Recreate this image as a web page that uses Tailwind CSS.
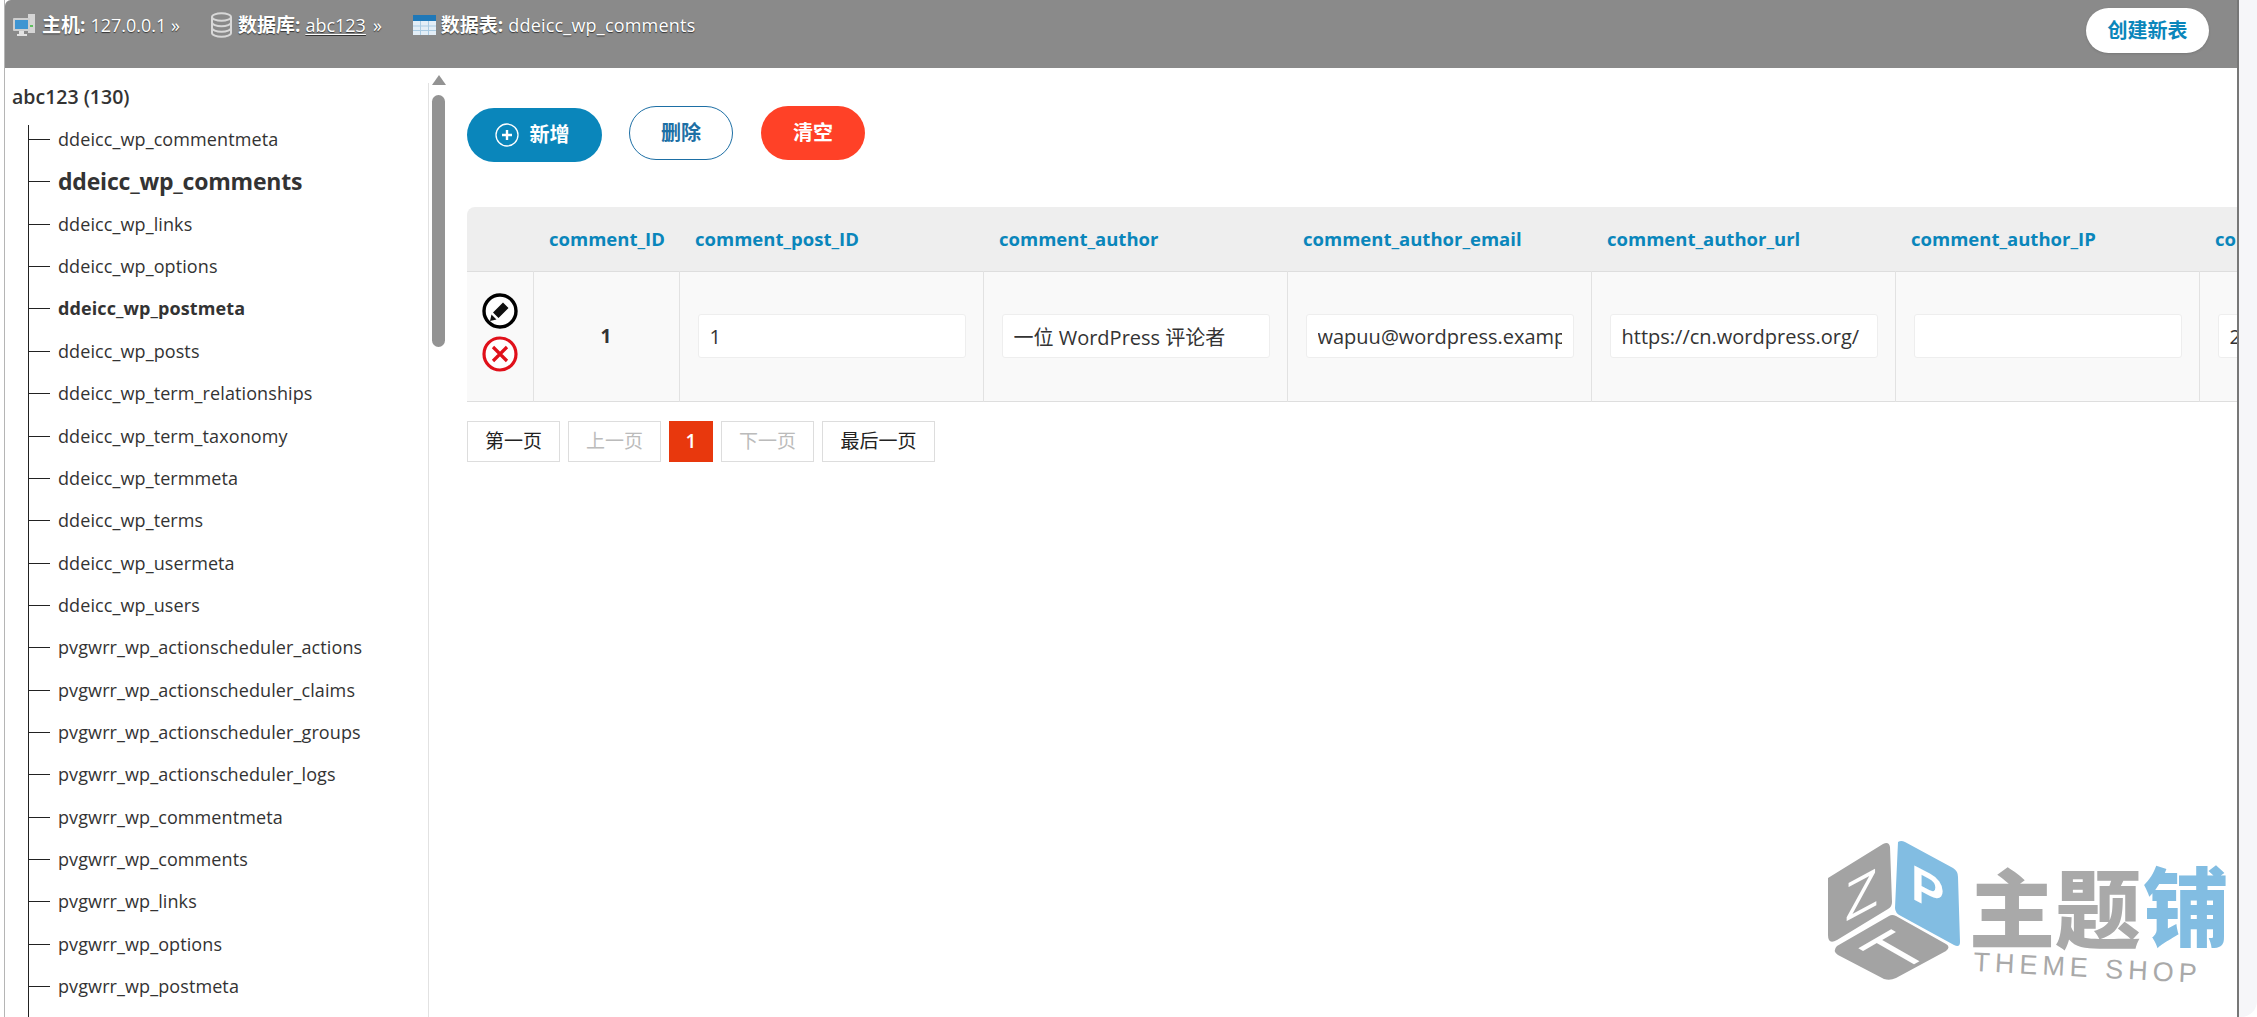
<!DOCTYPE html>
<html lang="zh-CN">
<head>
  <meta charset="UTF-8" />
  <title>数据表: ddeicc_wp_comments</title>
  <script src="https://cdn.jsdelivr.net/npm/@tailwindcss/browser@4"></script>
</head>
<body class="flex h-screen overflow-hidden bg-white pl-1 font-['Open_Sans','Noto_Sans_CJK_SC',sans-serif] text-[18px] text-[#333]">
  <div class="relative flex h-full w-[2235px] shrink-0 flex-col overflow-hidden border-l border-r-2 border-l-[#b5b5b5] border-r-[#777777] bg-white">
    <!-- Top bar -->
    <header class="flex h-[68px] shrink-0 items-start justify-between rounded-tl-md bg-[#8a8a8a] pl-[7px] pr-[28px] text-white [text-shadow:0_1px_1px_#333]">
      <div class="flex items-center pt-[12px] leading-[26px]">
        <svg class="mr-[6px] h-[24px] w-[24px]" viewBox="0 0 24 24">
          <rect x="16" y="1" width="7" height="19" fill="#d5d5d5" />
          <rect x="18" y="12" width="3" height="2" fill="#5fbf5f" />
          <rect x="1" y="5" width="17" height="13" rx="1" fill="#cfcfcf" />
          <rect x="3" y="7" width="13" height="9" fill="#3f95d2" />
          <path d="M7 18h5v3h3v2H5v-2h2z" fill="#e2e2e2" />
        </svg>
        <span class="text-[19px] font-bold">主机:</span>
        <span class="ml-[5px]">127.0.0.1 »</span>
        <svg class="ml-[30px] mr-[5px] h-[26px] w-[23px]" viewBox="0 0 23 26" fill="none" stroke="#d8d8d8" stroke-width="2">
          <ellipse cx="11.5" cy="5" rx="9.5" ry="3.8" />
          <path d="M2 5v16c0 2 4.300 3.800 9.500 3.800s9.500-1.800 9.500-3.800V5" />
          <path d="M2 10.500c0 2 4.300 3.800 9.500 3.800s9.500-1.800 9.500-3.800M2 16c0 2 4.300 3.800 9.500 3.800s9.500-1.800 9.500-3.800" />
        </svg>
        <span class="text-[19px] font-bold">数据库:</span>
        <a class="ml-[5px] underline underline-offset-2">abc123</a>
        <span class="ml-[7px]">»</span>
        <svg class="ml-[31px] mr-[5px] h-[20px] w-[23px]" viewBox="0 0 23 20">
          <rect width="23" height="20" fill="#e3eef7" />
          <rect width="23" height="6" fill="#1f78b8" />
          <path d="M0 11h23M0 15.500h23M7.500 6v14M15.500 6v14" stroke="#a9cbe3" stroke-width="1" />
        </svg>
        <span class="text-[19px] font-bold">数据表:</span>
        <span class="ml-[5px] tracking-[0.2px]">ddeicc_wp_comments</span>
      </div>
      <button class="mt-[8px] h-[45px] w-[123px] rounded-full bg-white text-[20px] font-bold text-[#0a86bb] shadow-sm [text-shadow:none]">创建新表</button>
    </header>

    <div class="flex min-h-0 flex-1">
      <!-- Table list -->
      <aside class="mt-[15px] w-[424px] shrink-0 border-r border-[#e2e2e2]">
        <h2 class="h-[28px] pl-[7px] text-[19.500px] leading-[28px] font-semibold text-[#333]">abc123 (130)</h2>
        <ul class="ml-[23px] mt-[14px] h-[900px] border-l border-[#222] tracking-[0.1px]">
          <li class="flex h-[28px] items-center"><span class="mr-[8px] h-px w-[21px] bg-[#222]"></span>ddeicc_wp_commentmeta</li>
          <li class="flex h-[50px] items-center pt-[7px] text-[23px] font-bold tracking-[-0.2px]"><span class="mr-[8px] h-px w-[21px] bg-[#222]"></span>ddeicc_wp_comments</li>
          <li class="flex h-[42.350px] items-center"><span class="mr-[8px] h-px w-[21px] bg-[#222]"></span>ddeicc_wp_links</li>
          <li class="flex h-[42px] items-center"><span class="mr-[8px] h-px w-[21px] bg-[#222]"></span>ddeicc_wp_options</li>
          <li class="flex h-[42.850px] items-center font-bold"><span class="mr-[8px] h-px w-[21px] bg-[#222]"></span>ddeicc_wp_postmeta</li>
          <li class="flex h-[42.350px] items-center"><span class="mr-[8px] h-px w-[21px] bg-[#222]"></span>ddeicc_wp_posts</li>
          <li class="flex h-[42.350px] items-center"><span class="mr-[8px] h-px w-[21px] bg-[#222]"></span>ddeicc_wp_term_relationships</li>
          <li class="flex h-[42.350px] items-center"><span class="mr-[8px] h-px w-[21px] bg-[#222]"></span>ddeicc_wp_term_taxonomy</li>
          <li class="flex h-[42.350px] items-center"><span class="mr-[8px] h-px w-[21px] bg-[#222]"></span>ddeicc_wp_termmeta</li>
          <li class="flex h-[42.350px] items-center"><span class="mr-[8px] h-px w-[21px] bg-[#222]"></span>ddeicc_wp_terms</li>
          <li class="flex h-[42.350px] items-center"><span class="mr-[8px] h-px w-[21px] bg-[#222]"></span>ddeicc_wp_usermeta</li>
          <li class="flex h-[42.350px] items-center"><span class="mr-[8px] h-px w-[21px] bg-[#222]"></span>ddeicc_wp_users</li>
          <li class="flex h-[42.350px] items-center"><span class="mr-[8px] h-px w-[21px] bg-[#222]"></span>pvgwrr_wp_actionscheduler_actions</li>
          <li class="flex h-[42.350px] items-center"><span class="mr-[8px] h-px w-[21px] bg-[#222]"></span>pvgwrr_wp_actionscheduler_claims</li>
          <li class="flex h-[42.350px] items-center"><span class="mr-[8px] h-px w-[21px] bg-[#222]"></span>pvgwrr_wp_actionscheduler_groups</li>
          <li class="flex h-[42.350px] items-center"><span class="mr-[8px] h-px w-[21px] bg-[#222]"></span>pvgwrr_wp_actionscheduler_logs</li>
          <li class="flex h-[42.350px] items-center"><span class="mr-[8px] h-px w-[21px] bg-[#222]"></span>pvgwrr_wp_commentmeta</li>
          <li class="flex h-[42.350px] items-center"><span class="mr-[8px] h-px w-[21px] bg-[#222]"></span>pvgwrr_wp_comments</li>
          <li class="flex h-[42.350px] items-center"><span class="mr-[8px] h-px w-[21px] bg-[#222]"></span>pvgwrr_wp_links</li>
          <li class="flex h-[42.350px] items-center"><span class="mr-[8px] h-px w-[21px] bg-[#222]"></span>pvgwrr_wp_options</li>
          <li class="flex h-[42.350px] items-center"><span class="mr-[8px] h-px w-[21px] bg-[#222]"></span>pvgwrr_wp_postmeta</li>
        </ul>
      </aside>

      <!-- Scrollbar -->
      <div class="flex w-[19px] shrink-0 flex-col items-center pt-[7px]">
        <div class="h-0 w-0 border-x-[7px] border-b-[10px] border-x-transparent border-b-[#939393]"></div>
        <div class="mt-[10px] h-[252px] w-[13px] rounded-full bg-[#939393]"></div>
      </div>

      <!-- Content -->
      <main class="min-w-0 flex-1 overflow-hidden pl-[19px] pt-[38px]">
        <div class="flex h-[101px] items-start text-[20px] font-bold">
          <button class="mt-[2px] flex h-[54px] w-[135px] items-center justify-center rounded-full bg-[#0a86bb] pr-[5px] text-white">
            <svg class="mr-[11px] h-[24px] w-[24px]" viewBox="0 0 24 24" fill="none" stroke="#fff">
              <circle cx="12" cy="12" r="11" stroke-width="1.300" />
              <path d="M12 7v10M7 12h10" stroke-width="2.400" />
            </svg>新增
          </button>
          <button class="ml-[27px] h-[54px] w-[104px] rounded-full border border-[#1d6fa5] bg-white text-[#1d6fa5]">删除</button>
          <button class="ml-[28px] h-[54px] w-[104px] rounded-full bg-[#ff4127] text-white">清空</button>
        </div>

        <table class="w-[2036px] max-w-none table-fixed border-collapse">
          <thead>
            <tr class="h-[64px] bg-[#eeeeee] text-left text-[18.500px] text-[#0a86bb]">
              <th class="w-[66px] rounded-tl-lg font-bold"></th>
              <th class="w-[146px] pl-[16px] font-bold">comment_ID</th>
              <th class="w-[304px] pl-[16px] font-bold">comment_post_ID</th>
              <th class="w-[304px] pl-[16px] font-bold">comment_author</th>
              <th class="w-[304px] pl-[16px] font-bold">comment_author_email</th>
              <th class="w-[304px] pl-[16px] font-bold">comment_author_url</th>
              <th class="w-[304px] pl-[16px] font-bold">comment_author_IP</th>
              <th class="w-[304px] pl-[16px] font-bold">comment_date</th>
            </tr>
          </thead>
          <tbody>
            <tr class="h-[130px] border-y border-[#dedede] bg-[#f9f9f9]">
              <td class="border-r border-[#e2e2e2]">
                <div class="mb-[7px] flex flex-col items-center gap-[7px]">
                  <svg class="h-[36px] w-[36px]" viewBox="0 0 36 36">
                    <circle cx="18" cy="18" r="16" fill="#fff" stroke="#000" stroke-width="3.400" />
                    <path d="M21 9.500l5.500 5.500-10 10-5.500-5.500z M9.500 21.500l5 5-6.500 1.500z" fill="#111" />
                  </svg>
                  <svg class="h-[36px] w-[36px]" viewBox="0 0 36 36">
                    <circle cx="18" cy="18" r="16" fill="#fff" stroke="#e0101a" stroke-width="3.200" />
                    <path d="M11 11l14 14M25 11L11 25" stroke="#e0101a" stroke-width="3.200" />
                  </svg>
                </div>
              </td>
              <td class="border-r border-[#e2e2e2] text-center text-[19px] font-bold">1</td>
              <td class="border-r border-[#e2e2e2] pl-[18px]"><input class="h-[44px] w-[268px] rounded-[3px] border border-[#eeeeee] bg-white px-[11px] text-[20px] text-[#333]" value="1" /></td>
              <td class="border-r border-[#e2e2e2] pl-[18px]"><input class="h-[44px] w-[268px] rounded-[3px] border border-[#eeeeee] bg-white px-[11px] text-[20px] text-[#333]" value="一位 WordPress 评论者" /></td>
              <td class="border-r border-[#e2e2e2] pl-[18px]"><input class="h-[44px] w-[268px] rounded-[3px] border border-[#eeeeee] bg-white px-[11px] text-[20px] text-[#333]" value="wapuu@wordpress.example.org" /></td>
              <td class="border-r border-[#e2e2e2] pl-[18px]"><input class="h-[44px] w-[268px] rounded-[3px] border border-[#eeeeee] bg-white px-[11px] text-[20px] text-[#333]" value="https://cn.wordpress.org/" /></td>
              <td class="border-r border-[#e2e2e2] pl-[18px]"><input class="h-[44px] w-[268px] rounded-[3px] border border-[#eeeeee] bg-white px-[11px] text-[20px] text-[#333]" value="" /></td>
              <td class="pl-[18px]"><input class="h-[44px] w-[268px] rounded-[3px] border border-[#eeeeee] bg-white px-[11px] text-[20px] text-[#333]" value="2019-01-01" /></td>
            </tr>
          </tbody>
        </table>

        <!-- Pagination -->
        <div class="mt-[19px] flex h-[41px] gap-[8px] text-[19px]">
          <a class="flex w-[93px] items-center justify-center border border-[#dddddd] text-[#222]">第一页</a>
          <a class="flex w-[93px] items-center justify-center border border-[#dddddd] text-[#bbbbbb]">上一页</a>
          <a class="flex w-[44px] items-center justify-center bg-[#e8380d] font-semibold text-white">1</a>
          <a class="flex w-[93px] items-center justify-center border border-[#dddddd] text-[#bbbbbb]">下一页</a>
          <a class="flex w-[113px] items-center justify-center border border-[#dddddd] text-[#222]">最后一页</a>
        </div>
      </main>
    </div>

    <!-- Watermark -->
    <svg class="absolute left-[1818px] top-[840px] h-[150px] w-[412px]" viewBox="0 0 412 150" font-family="'Noto Sans CJK SC', sans-serif">
      <path d="M5 38 60 4q6-3 7 3l2 55q0 5-4 7L14 100q-9 5-9-5z" fill="#a3a3a3" />
      <path d="M75 2q3-2 7 0l48 26q5 3 5 9l2 65q0 6-6 3L78 76q-6-3-6-8z" fill="#82bde2" />
      <path d="M14 106 66 76q3-2 7 0l50 28q5 3 0 7l-50 27q-6 3-12 1L15 115q-6-4-1-9z" fill="#a3a3a3" />
      <text font-size="54" fill="#fff" font-family="'Liberation Sans', sans-serif" transform="translate(22 82) skewY(-28)">Z</text>
      <text font-size="50" font-weight="700" fill="#fff" font-family="'Liberation Sans', sans-serif" transform="translate(88 58) skewY(28)">P</text>
      <text font-size="58" fill="#fff" font-family="'Liberation Sans', sans-serif" transform="matrix(1 -.58 1.05 .6 76 133)">T</text>
      <text x="146" y="102" font-size="86" font-weight="900" fill="#a9a9a9">主题</text>
      <text x="320" y="100" font-size="86" font-weight="900" fill="#82bde2">铺</text>
      <text x="150" y="131" font-size="27" fill="#a9a9a9" letter-spacing="5" font-family="'Liberation Sans', sans-serif" transform="rotate(3 150 131)">THEME SHOP</text>
    </svg>
  </div>
  <!-- Right strip of the window -->
  <div class="h-full flex-1 rounded-br-2xl bg-[#f6f6f9]"></div>
</body>
</html>
